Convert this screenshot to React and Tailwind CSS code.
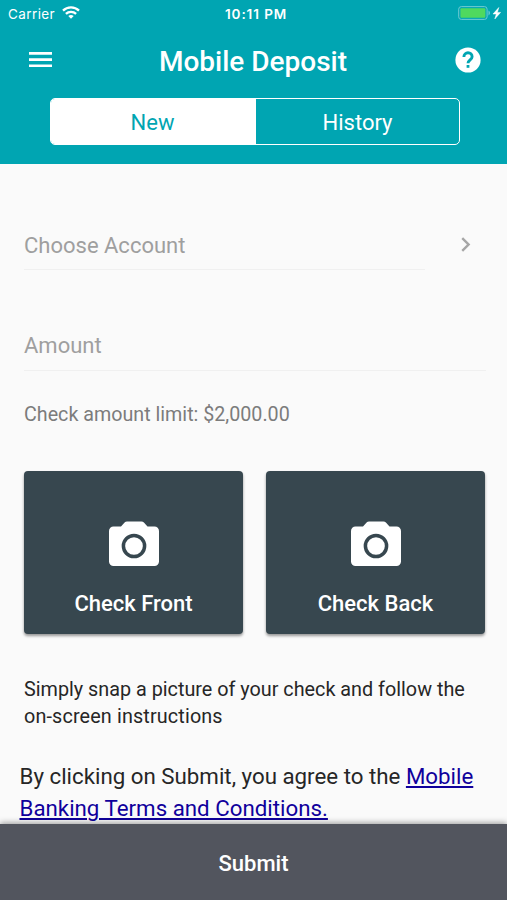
import React, { useState } from 'react';
import { MdChevronRight } from 'react-icons/md';

const StatusBar = () => (
  <div className="relative flex h-7 items-center justify-between pl-2 pr-[5px]">
    <div className="flex items-center gap-[7px]">
      <span className="font-[Inter,sans-serif] text-[13.5px] tracking-[0.4px]">Carrier</span>
      <svg width="18" height="13" viewBox="0 0 18 13" fill="none" stroke="currentColor" strokeWidth="2.3" className="-mt-[3px]">
        <path d="M1 4.6C5.4.3 12.6.3 17 4.6" />
        <path d="M3.9 7.9c2.8-2.7 7.4-2.7 10.2 0" />
        <path d="M6.3 10.1c1.6-1.4 3.8-1.4 5.4 0L9 12.8z" fill="currentColor" stroke="none" />
      </svg>
    </div>
    <span className="absolute left-[225px] top-[4px] font-[Inter,sans-serif] text-[13.5px] leading-5 font-semibold tracking-[0.9px] whitespace-nowrap">
      10:11 PM
    </span>
    <svg width="44" height="14" viewBox="0 0 44 14" className="-mt-0.5">
      <rect x=".7" y=".6" width="28.4" height="12.8" rx="2.6" fill="none" stroke="#6fcbd3" />
      <rect x="2.4" y="2.3" width="25" height="9.4" rx="1" fill="#4fd95f" />
      <path d="M30.5 4.6c1.9.7 1.9 4.1 0 4.8z" fill="#6fcbd3" />
      <path d="M40.8 1.5l-5.8 6.5h3.3l-1.5 5L42.6 6.4h-3.2z" fill="#fff" stroke="#fff" strokeWidth=".5" />
    </svg>
  </div>
);

const MenuIcon = () => (
  <svg width="23" height="16" viewBox="0 0 23 16" fill="currentColor">
    <path d="M0 0h23v2.7H0zM0 6.3h23v2.6H0zM0 12.5h23v2.6H0z" />
  </svg>
);

const HelpIcon = () => (
  <svg width="26" height="26" viewBox="0 0 26 26">
    <circle cx="13" cy="13" r="12.6" fill="#fff" />
    <path
      d="M8.9 9.9c0-2.3 1.8-4.1 4.1-4.1s4.1 1.7 4.1 3.9c0 3-4.1 3.4-4.1 6.6"
      fill="none"
      stroke="#00a5b2"
      strokeWidth="2.9"
    />
    <path d="M11.6 18h2.8v2.8h-2.8z" fill="#00a5b2" />
  </svg>
);

const CameraIcon = () => (
  <svg width="50" height="46" viewBox="0 0 50 46">
    <path
      d="M18 .5h14.5c1 0 1.7.3 2.4 1l3.6 4h7A4.5 4.5 0 0 1 50 10v30.5a4.5 4.5 0 0 1-4.5 4.5h-41A4.5 4.5 0 0 1 0 40.5V10a4.5 4.5 0 0 1 4.5-4.5H12l3.6-4c.7-.7 1.4-1 2.4-1z"
      fill="#fff"
    />
    <circle cx="25" cy="25" r="10.6" fill="none" stroke="#37474f" strokeWidth="3.5" />
  </svg>
);

const CheckButton = ({ label }) => (
  <button className="flex h-[163px] w-[219px] shrink-0 flex-col items-center rounded bg-[#37474f] pt-[50px] text-white shadow-[0_2px_3px_rgba(0,0,0,0.4)]">
    <CameraIcon />
    <span className="mt-[22px] text-[22px] leading-[30px] font-medium">{label}</span>
  </button>
);

const App = () => {
  const [tab, setTab] = useState('New');

  return (
    <div className="flex h-[900px] w-[507px] flex-col overflow-hidden bg-[#fafafa] font-[Roboto,sans-serif]">
      <header className="h-[164px] shrink-0 bg-[#00a5b2] text-white">
        <StatusBar />
        <div className="flex h-16 items-center justify-between pl-[29px] pr-[26px]">
          <MenuIcon />
          <h1 className="-ml-[1px] pt-[3px] text-[28px] font-medium">Mobile Deposit</h1>
          <HelpIcon />
        </div>
        <div className="ml-[50px] mt-1.5 flex h-[47px] w-[410px] overflow-hidden rounded-[5px] border-[1.5px] border-white">
          {['New', 'History'].map((name) => (
            <button
              key={name}
              onClick={() => setTab(name)}
              className={`flex-1 pt-[2px] text-[22px] ${tab === name ? 'bg-white pr-[2px] text-[#00a5b2]' : 'text-white'}`}
            >
              {name}
            </button>
          ))}
        </div>
      </header>

      <main className="min-h-0 flex-1 pl-6 pr-[21px]">
        <div className="mt-[56px] flex h-[50px] items-center justify-between pr-[6px]">
          <div className="flex h-full w-[401px] items-center border-b border-[#f0f0f0] pt-px text-[22px] text-[#9f9f9f]">
            Choose Account
          </div>
          <MdChevronRight size={29} className="-mt-[2px] text-[#a6a6a6]" />
        </div>
        <div className="mt-[50px] flex h-[51px] items-center border-b border-[#f0f0f0] pt-px text-[22px] text-[#9f9f9f]">
          Amount
        </div>
        <p className="mt-[29px] text-[19.7px] leading-[30px] text-[#7c7c7c]">Check amount limit: $2,000.00</p>

        <div className="mt-[41px] flex gap-[23px]">
          <CheckButton label="Check Front" />
          <CheckButton label="Check Back" />
        </div>

        <p className="mt-[42px] text-[19.8px] leading-[27px] whitespace-nowrap text-[#262626]">
          Simply snap a picture of your check and follow the<br />
          <span className="tracking-[0.14px]">on-screen instructions</span>
        </p>
        <p className="-ml-[4.5px] mt-[30px] text-[22.3px] leading-[32px] whitespace-nowrap text-[#262626]">
          By clicking on Submit, you agree to the{' '}
          <a className="text-[#10009c] underline decoration-[1.5px] underline-offset-2">Mobile<br />Banking Terms and Conditions.</a>
        </p>
      </main>

      <button className="relative h-[76px] shrink-0 bg-[#52555e] pt-[2px] text-[22px] font-medium text-white shadow-[0_-1px_6px_rgba(0,0,0,0.4)]">
        Submit
      </button>
    </div>
  );
};

export default App;
